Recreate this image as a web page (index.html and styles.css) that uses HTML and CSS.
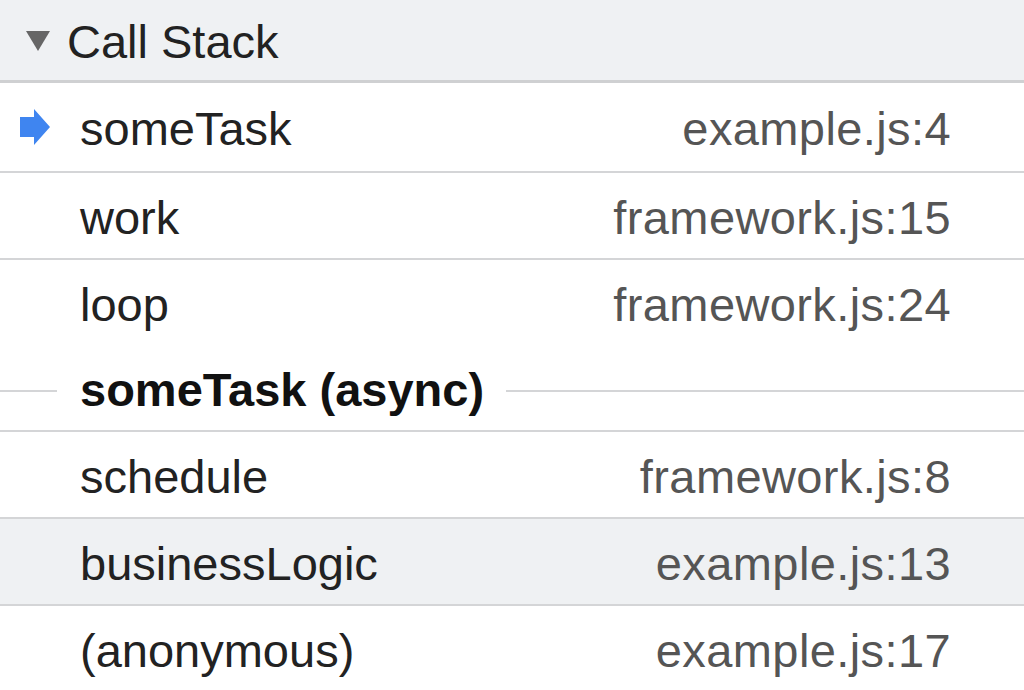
FILE: index.html
```html
<!DOCTYPE html>
<html>
<head>
<meta charset="utf-8">
<link rel="stylesheet" href="styles.css">
</head>
<body>
<div class="pane">
  <div class="header">
    <span class="tri"></span>
    <span class="title">Call Stack</span>
  </div>
  <div class="row first">
    <span class="gutter">
      <svg class="arrow" width="32" height="38" viewBox="0 0 32 38"><path d="M1 9 H15 V1 L31 19 L15 37 V29 H1 Z" fill="#3f85f0"/></svg>
    </span>
    <span class="fn">someTask</span>
    <span class="loc">example.js:4</span>
  </div>
  <div class="row">
    <span class="gutter"></span>
    <span class="fn">work</span>
    <span class="loc">framework.js:15</span>
  </div>
  <div class="row noline">
    <span class="gutter"></span>
    <span class="fn">loop</span>
    <span class="loc">framework.js:24</span>
  </div>
  <div class="async">
    <span class="rule left"></span>
    <span class="async-label">someTask (async)</span>
    <span class="rule right"></span>
  </div>
  <div class="row">
    <span class="gutter"></span>
    <span class="fn">schedule</span>
    <span class="loc">framework.js:8</span>
  </div>
  <div class="row selected">
    <span class="gutter"></span>
    <span class="fn">businessLogic</span>
    <span class="loc">example.js:13</span>
  </div>
  <div class="row last">
    <span class="gutter"></span>
    <span class="fn">(anonymous)</span>
    <span class="loc">example.js:17</span>
  </div>
</div>
</body>
</html>
```
FILE: styles.css
```css
html, body {
  margin: 0;
  padding: 0;
  background: #ffffff;
}
body {
  width: 1024px;
  height: 690px;
  overflow: hidden;
  font-family: "Liberation Sans", Arial, sans-serif;
  font-size: 47px;
  color: #222222;
}
.pane {
  display: flex;
  flex-direction: column;
}
.header {
  height: 80px;
  background: #eff1f3;
  border-bottom: 3px solid #cfd0d2;
  display: flex;
  align-items: center;
}
.tri {
  width: 0;
  height: 0;
  margin-left: 26px;
  margin-right: 17px;
  border-left: 12px solid transparent;
  border-right: 12px solid transparent;
  border-top: 20px solid #666666;
  margin-top: 2px;
}
.title {
  color: #222222;
  margin-top: 2px;
}
.row {
  height: 85px;
  border-bottom: 2px solid #d4d5d7;
  display: flex;
  align-items: center;
}
.row.first {
  height: 88px;
}
.row.noline {
  border-bottom: none;
}
.row.selected {
  background: #eff1f3;
}
.row.last {
  border-bottom: none;
}
.gutter {
  width: 80px;
  flex: none;
  display: flex;
  align-items: center;
}
.arrow {
  margin-left: 19px;
  display: block;
}
.fn {
  flex: 1;
  color: #222222;
  margin-top: 3px;
}
.loc {
  color: #555555;
  margin-right: 73px;
  margin-top: 3px;
  letter-spacing: 0.4px;
}
.async {
  height: 85px;
  border-bottom: 2px solid #d4d5d7;
  display: flex;
  align-items: center;
}
.rule {
  height: 2px;
  background: #d4d5d7;
  margin-top: 6px;
}
.rule.left {
  width: 57px;
  flex: none;
}
.rule.right {
  flex: 1;
}
.async-label {
  font-weight: bold;
  margin: 3px 22px 0 23px;
  color: #111111;
}
```
